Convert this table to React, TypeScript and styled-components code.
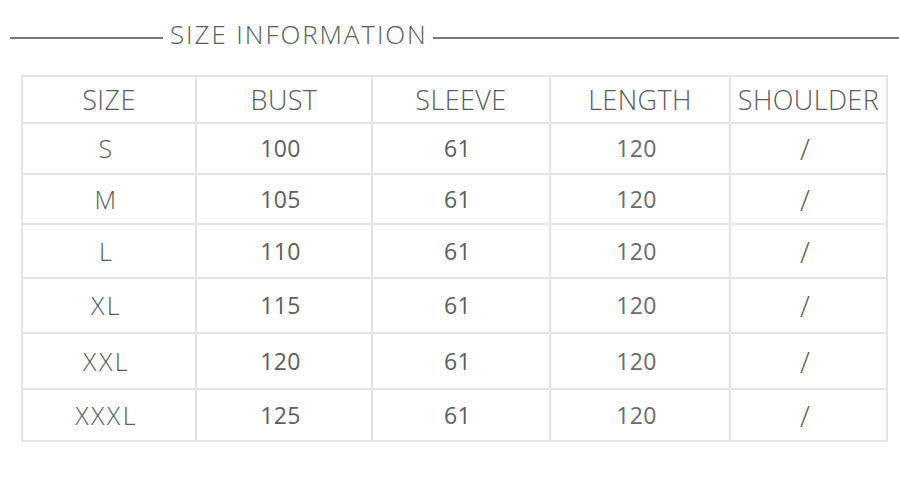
import styled, { createGlobalStyle } from 'styled-components';

const GlobalStyle = createGlobalStyle`
  html, body {
    margin: 0;
    padding: 0;
    background: #ffffff;
  }
  body {
    font-family: "Open Sans", "Noto Sans", "Liberation Sans", sans-serif;
    color: #5a5a5a;
  }
`;

const Page = styled.div`
  width: 899px;
  height: 489px;
  background: #fff;
  overflow: hidden;
`;

const TitleRow = styled.div`
  display: flex;
  align-items: center;
  height: 40px;
  margin-top: 17px;
  padding-left: 10px;
  gap: 7px;
`;

const Rule = styled.div<{ $width?: number }>`
  height: 2px;
  background: #757575;
  flex: ${(p) => (p.$width ? `0 0 ${p.$width}px` : '1 1 auto')};
  margin-top: 2px;
`;

const Title = styled.h2`
  margin: 0 -2px 6px 0;
  font-size: 26px;
  font-weight: 300;
  line-height: 1;
  color: #5a5a5a;
  letter-spacing: 1.9px;
  white-space: nowrap;
`;

const Table = styled.div`
  display: grid;
  grid-template-columns: 172px 174px 176px 178px 155px;
  grid-template-rows: 45px 49px 48px 52px 53px 54px 50px;
  gap: 2px;
  padding: 2px;
  background: #e4e4e4;
  width: max-content;
  margin: 18px 0 0 21px;
`;

type Kind = 'head' | 'size' | 'num' | 'len' | 'slash';

const Cell = styled.div<{ $kind: Kind }>`
  background: #fff;
  display: flex;
  align-items: center;
  justify-content: center;
  line-height: 1;
  white-space: nowrap;
  padding-right: ${(p) => (p.$kind === 'head' ? '0' : p.$kind === 'size' ? '5px' : '7px')};
  font-size: ${(p) =>
    p.$kind === 'head' ? '27px' : p.$kind === 'size' ? '25px' : p.$kind === 'slash' ? '29px' : '23px'};
  font-weight: ${(p) => (p.$kind === 'num' || p.$kind === 'len' ? 400 : 300)};
  letter-spacing: ${(p) => (p.$kind === 'head' ? '0.4px' : p.$kind === 'size' ? '2.4px' : '0.3px')};
  color: ${(p) => (p.$kind === 'num' ? '#5d5d5d' : p.$kind === 'len' ? '#6a6a6a' : '#5a5a5a')};
`;

const headers = ['SIZE', 'BUST', 'SLEEVE', 'LENGTH', 'SHOULDER'];

const rows = [
  ['S', '100', '61', '120', '/'],
  ['M', '105', '61', '120', '/'],
  ['L', '110', '61', '120', '/'],
  ['XL', '115', '61', '120', '/'],
  ['XXL', '120', '61', '120', '/'],
  ['XXXL', '125', '61', '120', '/'],
];

const kinds: Kind[] = ['size', 'num', 'num', 'len', 'slash'];

export default function App() {
  return (
    <Page>
      <GlobalStyle />
      <TitleRow>
        <Rule $width={153} />
        <Title>SIZE INFORMATION</Title>
        <Rule />
      </TitleRow>
      <Table>
        {headers.map((h) => (
          <Cell key={h} $kind="head">
            {h}
          </Cell>
        ))}
        {rows.map((r) =>
          r.map((v, i) => (
            <Cell key={r[0] + i} $kind={kinds[i]}>
              {v}
            </Cell>
          ))
        )}
      </Table>
    </Page>
  );
}
